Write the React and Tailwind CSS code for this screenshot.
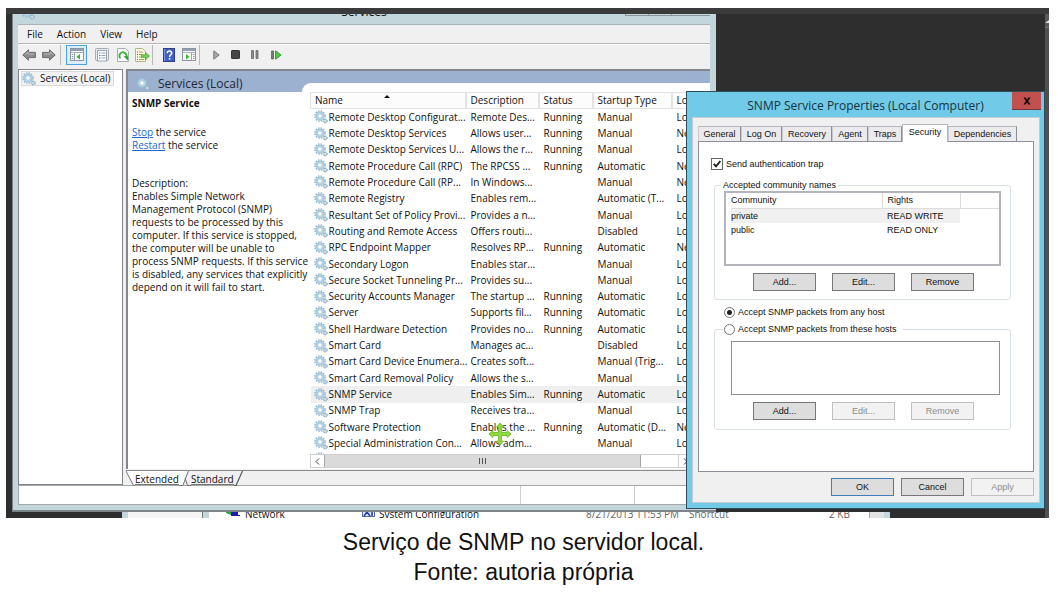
import React from "react";

const services = [
  ["Remote Desktop Configurat...", "Remote Des...", "Running", "Manual", "Loc..."],
  ["Remote Desktop Services", "Allows user...", "Running", "Manual", "Net..."],
  ["Remote Desktop Services U...", "Allows the r...", "Running", "Manual", "Loc..."],
  ["Remote Procedure Call (RPC)", "The RPCSS ...", "Running", "Automatic", "Net..."],
  ["Remote Procedure Call (RP...", "In Windows...", "", "Manual", "Net..."],
  ["Remote Registry", "Enables rem...", "", "Automatic (T...", "Loc..."],
  ["Resultant Set of Policy Provi...", "Provides a n...", "", "Manual", "Loc..."],
  ["Routing and Remote Access", "Offers routi...", "", "Disabled", "Loc..."],
  ["RPC Endpoint Mapper", "Resolves RP...", "Running", "Automatic", "Net..."],
  ["Secondary Logon", "Enables star...", "", "Manual", "Loc..."],
  ["Secure Socket Tunneling Pr...", "Provides su...", "", "Manual", "Loc..."],
  ["Security Accounts Manager", "The startup ...", "Running", "Automatic", "Loc..."],
  ["Server", "Supports fil...", "Running", "Automatic", "Loc..."],
  ["Shell Hardware Detection", "Provides no...", "Running", "Automatic", "Loc..."],
  ["Smart Card", "Manages ac...", "", "Disabled", "Loc..."],
  ["Smart Card Device Enumera...", "Creates soft...", "", "Manual (Trig...", "Loc..."],
  ["Smart Card Removal Policy", "Allows the s...", "", "Manual", "Loc..."],
  ["SNMP Service", "Enables Sim...", "Running", "Automatic", "Loc..."],
  ["SNMP Trap", "Receives tra...", "", "Manual", "Loc..."],
  ["Software Protection", "Enables the ...", "Running", "Automatic (D...", "Net..."],
  ["Special Administration Con...", "Allows adm...", "", "Manual", "Loc..."],
  ["", "", "", "", ""],
];

function Gear({ className = "h-[14px] w-[14px]" }) {
  return (
    <svg viewBox="0 0 14 14" className={className} aria-hidden="true">
      <circle cx="6" cy="6" r="5" fill="none" stroke="#93b3c8" strokeWidth="1.6" strokeDasharray="1.5 1.12" />
      <circle cx="6" cy="6" r="3.6" fill="#e9f3f9" stroke="#a9cbe0" strokeWidth="2" />
      <circle cx="6" cy="6" r="2.2" fill="#fff" stroke="#8db4cc" strokeWidth="0.6" />
      <circle cx="11.3" cy="11" r="1.9" fill="#c9dde9" stroke="#86a9c0" strokeWidth="1.2" strokeDasharray="1 0.6" />
    </svg>
  );
}

function Arrow({ flip }) {
  return (
    <svg viewBox="0 0 14 12" className={flip ? "h-[12px] w-[14px] -scale-x-100" : "h-[12px] w-[14px]"} aria-hidden="true">
      <path d="M0.8 6 L6.5 0.8 V3.4 H13.4 V8.6 H6.5 V11.2 Z" fill="#8d8d8d" stroke="#6a6a6a" strokeWidth="1" strokeLinejoin="round" />
      <path d="M3 5.6 L6 3 V5 H12" fill="none" stroke="#bcbcbc" strokeWidth="0.9" />
    </svg>
  );
}

function TreeIcon({ play }) {
  return (
    <svg viewBox="0 0 14 13" className="h-[13px] w-[14px]" aria-hidden="true">
      <rect x="0.5" y="0.5" width="13" height="12" fill="#fafafa" stroke="#8b95a3" />
      <rect x="1" y="1" width="12" height="2" fill="#93a0b3" />
      <path d="M1 4.5H13" stroke="#aab4c2" />
      {play ? (
        <>
          <path d="M9.5 5V12" stroke="#9aa5b4" />
          <path d="M11 6.5h1.5M11 8.5h1.5M11 10.5h1.5" stroke="#8b95a3" />
          <path d="M4 6 L7.5 8.7 L4 11.4Z" fill="#39b52e" />
        </>
      ) : (
        <>
          <path d="M4.5 5V12" stroke="#9aa5b4" />
          <path d="M1.8 6.5h1.5M1.8 8.5h1.5M1.8 10.5h1.5" stroke="#8b95a3" />
          <path d="M10 6 L6.5 8.7 L10 11.4Z" fill="#39b52e" />
        </>
      )}
    </svg>
  );
}

function Sep({ className }) {
  return <span className={"h-[20px] w-px shrink-0 bg-[#b9b9b9] " + className} />;
}

function ToolButton({ label, className, children }) {
  return (
    <button type="button" aria-label={label} className={"flex shrink-0 items-center justify-center " + className}>
      {children}
    </button>
  );
}

function Toolbar() {
  return (
    <div className="flex h-[25px] items-center border-t border-white bg-[#f0f0f0] pb-[5px] pl-[4px]">
      <ToolButton label="Back" className="w-[14px]"><Arrow /></ToolButton>
      <ToolButton label="Forward" className="ml-[6px] w-[14px]"><Arrow flip /></ToolButton>
      <Sep className="ml-[4px]" />
      <ToolButton label="Show console tree" className="ml-[5px] h-[20px] w-[21px] border border-[#4aa3df] bg-[#dcecf8]"><TreeIcon /></ToolButton>
      <ToolButton label="Properties" className="ml-[8px] w-[14px]">
        <svg viewBox="0 0 14 14" className="h-[14px] w-[14px]" aria-hidden="true">
          <rect x="0.5" y="0.5" width="13" height="12" rx="1" fill="#e8ebef" stroke="#a3abb5" />
          <rect x="2.5" y="2.5" width="9" height="10.5" fill="#fff" stroke="#9aa5b3" />
          <path d="M4 5h1.5M4 7.5h1.5M4 10h1.5" stroke="#5c7ea8" />
          <path d="M6.5 5h4M6.5 7.5h4M6.5 10h4" stroke="#8fa3bb" />
        </svg>
      </ToolButton>
      <ToolButton label="Refresh" className="ml-[8px] w-[12px]">
        <svg viewBox="0 0 12 14" className="h-[14px] w-[12px]" aria-hidden="true">
          <path d="M0.5 0.5H8.5L11.5 3.5V13.5H0.5Z" fill="#fff" stroke="#a9adb2" />
          <path d="M3.6 10.4 A3.5 3.5 0 1 1 9 9.6" fill="none" stroke="#36b336" strokeWidth="1.8" />
          <path d="M6.4 8.2 H11 V12.6Z" fill="#2ba32b" />
        </svg>
      </ToolButton>
      <ToolButton label="Export list" className="ml-[6px] w-[15px]">
        <svg viewBox="0 0 15 14" className="h-[14px] w-[15px]" aria-hidden="true">
          <path d="M0.5 0.5H7.5L10.5 3.5V13.5H0.5Z" fill="#fdf9dd" stroke="#b7b18d" />
          <path d="M2 4h1M2 6.5h1M2 9h1M2 11.5h1" stroke="#666" />
          <path d="M4 4h4M4 6.5h3M4 9h3M4 11.5h5" stroke="#a59f7c" />
          <path d="M6.5 6.8H10.5V4.4L14.6 8.1L10.5 11.8V9.4H6.5Z" fill="#6fd150" stroke="#3aa12c" strokeWidth="0.6" />
        </svg>
      </ToolButton>
      <Sep className="ml-[2px]" />
      <ToolButton label="Help" className="ml-[10px] w-[12px]">
        <svg viewBox="0 0 12 14" className="h-[14px] w-[12px]" aria-hidden="true">
          <rect x="0.5" y="0.5" width="11" height="13" fill="#3f5fc4" stroke="#2b3f8e" />
          <path d="M1.5 1V13" stroke="#7f98e6" />
          <path d="M4.3 5.2 C4.3 2.4 8.7 2.5 8.7 5 C8.7 6.9 6.6 6.7 6.6 8.9" fill="none" stroke="#fff" strokeWidth="1.5" />
          <rect x="5.8" y="10" width="1.6" height="1.6" fill="#fff" />
        </svg>
      </ToolButton>
      <ToolButton label="Show action pane" className="ml-[7px] w-[14px]"><TreeIcon play /></ToolButton>
      <Sep className="ml-[3px]" />
      <ToolButton label="Start service" className="ml-[13px] w-[7px]">
        <svg viewBox="0 0 7 10" className="h-[10px] w-[7px]" aria-hidden="true"><path d="M0.8 0.8 L6.2 5 L0.8 9.2Z" fill="#a2a6a6" stroke="#777c7c" /></svg>
      </ToolButton>
      <ToolButton label="Stop service" className="ml-[11px] w-[9px]">
        <svg viewBox="0 0 9 9" className="h-[9px] w-[9px]" aria-hidden="true"><rect x="0.5" y="0.5" width="8" height="8" rx="0.6" fill="#474747" stroke="#333" /></svg>
      </ToolButton>
      <ToolButton label="Pause service" className="ml-[11px] w-[8px]">
        <svg viewBox="0 0 8 9" className="h-[9px] w-[8px]" aria-hidden="true"><path d="M0.5 0.5h2v8h-2zM5 0.5h2v8h-2z" fill="#8b8b8b" stroke="#666" strokeWidth="0.8" /></svg>
      </ToolButton>
      <ToolButton label="Restart service" className="ml-[12px] w-[11px]">
        <svg viewBox="0 0 11 10" className="h-[10px] w-[11px]" aria-hidden="true">
          <path d="M0.5 1h2v8h-2z" fill="#777" stroke="#555" strokeWidth="0.7" />
          <path d="M4.6 0.8 L10 5 L4.6 9.2Z" fill="#46d03d" stroke="#27922a" strokeWidth="0.9" />
        </svg>
      </ToolButton>
    </div>
  );
}

const th = "relative border-r-2 border-[#e3e3e3] bg-[#fcfcfc] p-0 pl-[4px] text-left font-normal";
const td = "whitespace-nowrap p-0 pl-[5px]";

function ServiceTable() {
  return (
    <div className="h-[362px] overflow-hidden">
      <table className="h-[375px] w-full table-fixed border-collapse leading-[15px]">
        <colgroup>
          <col className="w-[155px]" />
          <col className="w-[73px]" />
          <col className="w-[54px]" />
          <col className="w-[79px]" />
          <col />
        </colgroup>
        <thead>
          <tr className="h-[16px] border border-[#e3e3e3]">
            <th className={th}>
              Name
              <svg viewBox="0 0 6 3" className="absolute left-[73px] top-[2px] h-[3px] w-[6px]" aria-hidden="true"><path d="M0 3L3 0L6 3Z" fill="#111" /></svg>
            </th>
            <th className={th}>Description</th>
            <th className={th}>Status</th>
            <th className={th}>Startup Type</th>
            <th className="bg-[#fcfcfc] p-0 pl-[4px] text-left font-normal">Log</th>
          </tr>
        </thead>
        <tbody>
          {services.map((r, i) => (
            <tr key={i} className={r[0] === "SNMP Service" ? "bg-[#efefef]" : ""}>
              <td className="whitespace-nowrap p-0 pl-[3px]">
                <span className="flex items-center gap-[1px]">
                  <Gear className="h-[14px] w-[14px] shrink-0" />
                  {r[0]}
                </span>
              </td>
              <td className={td}>{r[1]}</td>
              <td className={td}>{r[2]}</td>
              <td className={td}>{r[3]}</td>
              <td className={td}>{r[4]}</td>
            </tr>
          ))}
        </tbody>
      </table>
    </div>
  );
}

function HScroll() {
  return (
    <div className="flex h-[14px] border border-[#cfcfcf] bg-white">
      <button type="button" aria-label="Scroll left" className="flex w-[13px] items-center justify-center">
        <svg viewBox="0 0 5 7" className="h-[7px] w-[5px]" aria-hidden="true"><path d="M4 0.5L1 3.5L4 6.5" fill="none" stroke="#444" /></svg>
      </button>
      <div className="flex w-[317px] items-center justify-center gap-[2px] border-x border-[#a5a5a5] bg-[#dadada]">
        <span className="h-[6px] w-px bg-[#555]" />
        <span className="h-[6px] w-px bg-[#555]" />
        <span className="h-[6px] w-px bg-[#555]" />
      </div>
      <span className="w-[38px] border-r border-[#cfcfcf]" />
      <button type="button" aria-label="Scroll right" className="flex w-[13px] items-center justify-center">
        <svg viewBox="0 0 5 7" className="h-[7px] w-[5px]" aria-hidden="true"><path d="M1 0.5L4 3.5L1 6.5" fill="none" stroke="#444" /></svg>
      </button>
    </div>
  );
}

function ServicesWindow() {
  return (
    <section aria-label="Services" className="ml-[6px] mr-[333px] overflow-hidden border-b-2 border-l border-[#7c8589] bg-[#c3d6db] pb-[5px] pl-[5px] pr-[6px] text-[10px] text-[#111]">
      <div className="flex h-[10px] items-end overflow-hidden">
        <Gear className="-mt-[8px] ml-[3px] h-[14px] w-[14px] shrink-0 self-start" />
        <span className="flex-1 pb-[3px] pl-[68px] text-center text-[12px] leading-[18px]">Services</span>
        <span className="-mr-[2px] flex h-full w-[87px] shrink-0 pb-[8px]">
          <span className="w-[24px] border border-t-0 border-[#8a9599]" />
          <span className="w-[23px] border-b border-r border-[#8a9599]" />
          <span className="flex-1 border-b border-r border-[#8a9599]" />
        </span>
      </div>
      <div className="border-t border-[#aab4b8] bg-[#f0f0f0]">
        <nav className="flex h-[19px] items-center gap-[14px] border-b border-[#b5b5b5] pl-[9px]">
          <button type="button">File</button>
          <button type="button">Action</button>
          <button type="button">View</button>
          <button type="button">Help</button>
        </nav>
        <Toolbar />
        <div className="flex">
          <div className="w-[105px] shrink-0 border border-[#84848c] bg-white pl-[2px] pt-[1px]">
            <button type="button" className="flex h-[15px] items-center gap-[4px] whitespace-nowrap border border-[#dadada] bg-[#f3f3f3] pr-[3px] leading-[13px]">
              <Gear />
              Services (Local)
            </button>
          </div>
          <div className="ml-[3px] min-w-0 flex-1">
            <div className="flex border-l-2 border-t-2 border-[#85858d] bg-white pb-[1px]">
              <div className="w-[174px] shrink-0">
                <div className="flex h-[21px] items-center gap-[8px] overflow-hidden bg-[#9cb1cf] pl-[8px] pt-[5px] text-[12px] leading-[16px] text-[#1d2733]">
                  <Gear />
                  Services (Local)
                </div>
                <div className="pl-[4px] pt-[5px] leading-[13px]">
                  <h2 className="font-bold">SNMP Service</h2>
                  <p className="mt-[16px]"><a href="#stop" className="text-[#1f66d0] underline">Stop</a> the service</p>
                  <p><a href="#restart" className="text-[#1f66d0] underline">Restart</a> the service</p>
                  <p className="mt-[25px]">Description:</p>
                  <p className="whitespace-nowrap">
                    Enables Simple Network<br />
                    Management Protocol (SNMP)<br />
                    requests to be processed by this<br />
                    computer. If this service is stopped,<br />
                    the computer will be unable to<br />
                    process SNMP requests. If this service<br />
                    is disabled, any services that explicitly<br />
                    depend on it will fail to start.
                  </p>
                </div>
              </div>
              <div className="min-w-0 flex-1">
                <div className="bg-[#9cb1cf] pt-[12px]">
                  <div className="h-[9px] rounded-tl-[9px] bg-white" />
                </div>
                <div className="pl-[8px]">
                  <ServiceTable />
                  <HScroll />
                </div>
              </div>
            </div>
            <div className="mt-[1px] flex h-[15px] border-t border-[#8b8b8b] leading-[14px]">
              <svg viewBox="0 0 9 15" className="h-[15px] w-[9px]" aria-hidden="true"><path d="M0 0L8 15H9V0Z" fill="#fff" /><path d="M0 0L7.5 14.5H9" fill="none" stroke="#777" /></svg>
              <button type="button" className="border-b border-[#777] bg-white pt-px">Extended</button>
              <svg viewBox="0 0 14 15" className="h-[15px] w-[12px]" preserveAspectRatio="none" aria-hidden="true">
                <path d="M0 0H11L4.5 15H0Z" fill="#fff" />
                <path d="M0 14.5H4.5L11 0M7 7L10 14.5H14" fill="none" stroke="#666" />
              </svg>
              <button type="button" className="border-b border-[#777] pt-px">Standard</button>
              <svg viewBox="0 0 9 15" className="h-[15px] w-[9px]" aria-hidden="true"><path d="M0 14.5H2L8.5 0" fill="none" stroke="#555" strokeWidth="1.2" /></svg>
            </div>
          </div>
        </div>
        <div className="flex h-[20px] border border-[#a3a9ab] bg-white">
          <span className="flex-1 border-r border-[#cdcdcd]" />
          <span className="w-[114px] border-r border-[#cdcdcd]" />
          <span className="w-[74px]" />
        </div>
      </div>
    </section>
  );
}

function Btn({ children, disabled, primary }) {
  const look = disabled
    ? "border-[#bfbfbf] bg-[#f2f2f2] text-[#8c8c8c]"
    : primary
      ? "border-[#3f7fb5] bg-[#dddddd]"
      : "border-[#777777] bg-[#dddddd]";
  return (
    <button type="button" disabled={disabled} className={"h-[18px] w-[63px] shrink-0 border pt-px " + look}>
      {children}
    </button>
  );
}

function Radio({ id, label, checked }) {
  return (
    <span className="flex items-center gap-[3px] leading-[12px]">
      <input
        type="radio"
        name="hosts"
        id={id}
        defaultChecked={checked}
        className="h-[11px] w-[11px] shrink-0 appearance-none rounded-full border border-[#777] bg-white bg-clip-content p-[2px] checked:bg-[#222]"
      />
      <label htmlFor={id}>{label}</label>
    </span>
  );
}

const tabs = [
  ["General", "w-[43px]"],
  ["Log On", "w-[41px]"],
  ["Recovery", "w-[50px]"],
  ["Agent", "w-[36px]"],
  ["Traps", "w-[34px]"],
  ["Security", "w-[46px]"],
  ["Dependencies", "w-[69px]"],
];

function Dialog() {
  return (
    <section aria-label="SNMP Service Properties" className="absolute right-[4px] top-[83px] w-[359px] border border-[#2f4d5a] bg-[#70cae8] pb-[5px] pl-[5px] pr-[3px] font-['Liberation_Sans',Arial,sans-serif] text-[9px] text-[#111]">
      <header className="flex h-[25px] items-start">
        <h1 className="flex-1 pl-[27px] text-center font-['Open_Sans','Noto_Sans',sans-serif] text-[12px] leading-[27px] text-[#16323d]">
          SNMP Service Properties (Local Computer)
        </h1>
        <button type="button" aria-label="Close" className="flex h-[18px] w-[29px] items-center justify-center border-b border-[#6d3a38] bg-[#c1504e]">
          <svg viewBox="0 0 8 8" className="h-[8px] w-[8px]" aria-hidden="true"><path d="M0.5 0.5h2.2L4 2.7L5.3 0.5h2.2L5.2 4L7.5 7.5H5.3L4 5.3L2.7 7.5H0.5L2.8 4Z" fill="#170808" /></svg>
        </button>
      </header>
      <div className="mr-[1px] border border-[#c3ccd0] bg-[#f0f0f0] px-[5px] pb-[6px] pt-[6px]">
        <div role="tablist" className="flex h-[17px] items-end">
          {tabs.map(([t, w]) =>
            t === "Security" ? (
              <button key={t} role="tab" aria-selected="true" type="button" className={"relative -mb-[1px] h-[18px] shrink-0 border border-b-0 border-[#b5b5bb] bg-white pb-[2px] " + w}>{t}</button>
            ) : (
              <button key={t} role="tab" aria-selected="false" type="button" className={"h-[15px] shrink-0 border border-b-0 border-l-[#c9c9cf] border-r-[#8d8d97] border-t-[#b5b5bb] bg-[#ebebed] pt-px " + w}>{t}</button>
            )
          )}
        </div>
        <div className="border border-[#8f8f99] bg-white pb-[41px] pl-[15px] pr-[22px] pt-[16px]">
          <div className="-ml-[3px] flex items-center gap-[3px] leading-[12px]">
            <span className="relative flex h-[12px] w-[12px]">
              <input id="trap" type="checkbox" defaultChecked className="h-[12px] w-[12px] appearance-none border border-[#666] bg-white" />
              <svg viewBox="0 0 12 12" className="pointer-events-none absolute inset-0 h-[12px] w-[12px]" aria-hidden="true"><path d="M2.8 5.8L5 8.3L9.4 3" fill="none" stroke="#222" strokeWidth="1.9" /></svg>
            </span>
            <label htmlFor="trap">Send authentication trap</label>
          </div>
          <fieldset className="mt-[9px] rounded-[3px] border border-[#d9e1e6] px-[9px] pb-[8px]">
            <legend className="-ml-[3px] px-[2px] leading-[12px]">Accepted community names</legend>
            <div className="h-[75px] border-2 border-[#b4b4bc] bg-white pl-[5px]">
              <table className="w-full table-fixed border-collapse leading-[14px]">
                <colgroup>
                  <col className="w-[151px]" />
                  <col className="w-[78px]" />
                  <col />
                </colgroup>
                <thead>
                  <tr className="h-[15px] border-b border-[#dcdcdc]">
                    <th className="border-r border-[#dcdcdc] p-0 text-left font-normal">Community</th>
                    <th className="border-r border-[#dcdcdc] p-0 pl-[5px] text-left font-normal">Rights</th>
                    <th className="p-0" />
                  </tr>
                </thead>
                <tbody>
                  <tr className="h-[14px]">
                    <td className="bg-[#f0f0f0] p-0">private</td>
                    <td className="whitespace-nowrap bg-[#f0f0f0] p-0 pl-[5px]">READ WRITE</td>
                    <td className="p-0" />
                  </tr>
                  <tr className="h-[14px]">
                    <td className="p-0">public</td>
                    <td className="whitespace-nowrap p-0 pl-[5px]">READ ONLY</td>
                    <td className="p-0" />
                  </tr>
                </tbody>
              </table>
            </div>
            <div className="mt-[7px] flex gap-[16px] pl-[29px]">
              <Btn>Add...</Btn>
              <Btn>Edit...</Btn>
              <Btn>Remove</Btn>
            </div>
          </fieldset>
          <div className="mt-[6px] pl-[10px]"><Radio id="any" label="Accept SNMP packets from any host" checked /></div>
          <fieldset className="mt-[5px] rounded-[3px] border border-[#d9e1e6] px-[9px] pb-[9px]">
            <legend className="pr-[6px]"><Radio id="these" label="Accept SNMP packets from these hosts" /></legend>
            <div className="ml-[7px] mr-[1px] mt-[6px] h-[54px] border border-[#8f8f99] bg-white" />
            <div className="mt-[7px] flex gap-[16px] pl-[29px]">
              <Btn>Add...</Btn>
              <Btn disabled>Edit...</Btn>
              <Btn disabled>Remove</Btn>
            </div>
          </fieldset>
        </div>
        <div className="mt-[6px] flex justify-end gap-[7px]">
          <Btn primary>OK</Btn>
          <Btn>Cancel</Btn>
          <Btn disabled>Apply</Btn>
        </div>
      </div>
    </section>
  );
}

function ExplorerStrip() {
  return (
    <div className="mr-[4px] flex h-[6px] overflow-hidden text-[10px] leading-[4px] text-[#666]">
      <span className="ml-[116px] w-[6px] bg-[#c3d6db]" />
      <span className="w-[75px] border-r border-[#777] bg-[#f5f5f5]" />
      <span className="w-[6px] bg-[#c3d6db]" />
      <span className="flex flex-1 overflow-hidden bg-white">
        <svg viewBox="0 0 14 5" className="ml-[17px] h-[5px] w-[14px] shrink-0" aria-hidden="true"><path d="M0 0H5V3L0 1Z" fill="#2ca53a" /><path d="M5 0H12V3H14V4H5Z" fill="#1c1cb0" /></svg>
        <span className="ml-[5px] w-[117px] shrink-0 text-[#111]">Network</span>
        <svg viewBox="0 0 14 5" className="h-[5px] w-[14px] shrink-0" aria-hidden="true"><rect x="0.5" y="-2" width="12" height="6.5" fill="#dfe6f5" stroke="#5a6ab0" /><path d="M2 4L5 0L8 4M10 0V4" fill="none" stroke="#2338a8" strokeWidth="1.5" /></svg>
        <span className="ml-[3px] w-[207px] shrink-0 text-[#111]">System Configuration</span>
        <span className="w-[103px] shrink-0 whitespace-nowrap">8/21/2013 11:53 PM</span>
        <span className="w-[140px] shrink-0">Shortcut</span>
        <span className="shrink-0">2 KB</span>
      </span>
      <span className="w-[15px] border-l border-[#aaa] bg-[#e2e2e2]" />
      <span className="w-[6px] bg-[#c3d6db]" />
      <span className="w-[155px]" />
    </div>
  );
}

export default function App() {
  return (
    <main className="min-h-screen bg-white pl-[6px] pr-[9px] pt-[8px] font-['Open_Sans','Noto_Sans',sans-serif]">
      <figure>
        <div className="relative overflow-hidden bg-[#2e2e2e]">
          <div className="h-[6px] bg-[#3b3b3b]" />
          <div className="absolute bottom-0 right-0 top-[6px] w-[4px] bg-[#505050]">
            <div className="h-[14px] border-b border-[#777] bg-[#5a5a5a] pt-[6px]">
              <svg viewBox="0 0 4 3" className="h-[3px] w-[4px]" aria-hidden="true"><path d="M0 3L4 0V3Z" fill="#ddd" /></svg>
            </div>
          </div>
          <ServicesWindow />
          <ExplorerStrip />
          <Dialog />
          <svg viewBox="0 0 22 22" className="absolute left-[483px] top-[415px] h-[22px] w-[22px]" aria-hidden="true">
            <path d="M11 0L14.5 4H12.5V9.5H18V7.5L22 11L18 14.5V12.5H12.5V18H14.5L11 22L7.5 18H9.5V12.5H4V14.5L0 11L4 7.5V9.5H9.5V4H7.5Z" fill="#8fdc3a" stroke="#6fb82a" strokeWidth="0.8" />
          </svg>
        </div>
        <figcaption className="pr-[8px] pt-[9px] text-center font-['Liberation_Sans',Arial,sans-serif] text-[23px] leading-[30px] text-[#111]">
          Serviço de SNMP no servidor local.
          <br />
          Fonte: autoria própria
        </figcaption>
      </figure>
    </main>
  );
}
